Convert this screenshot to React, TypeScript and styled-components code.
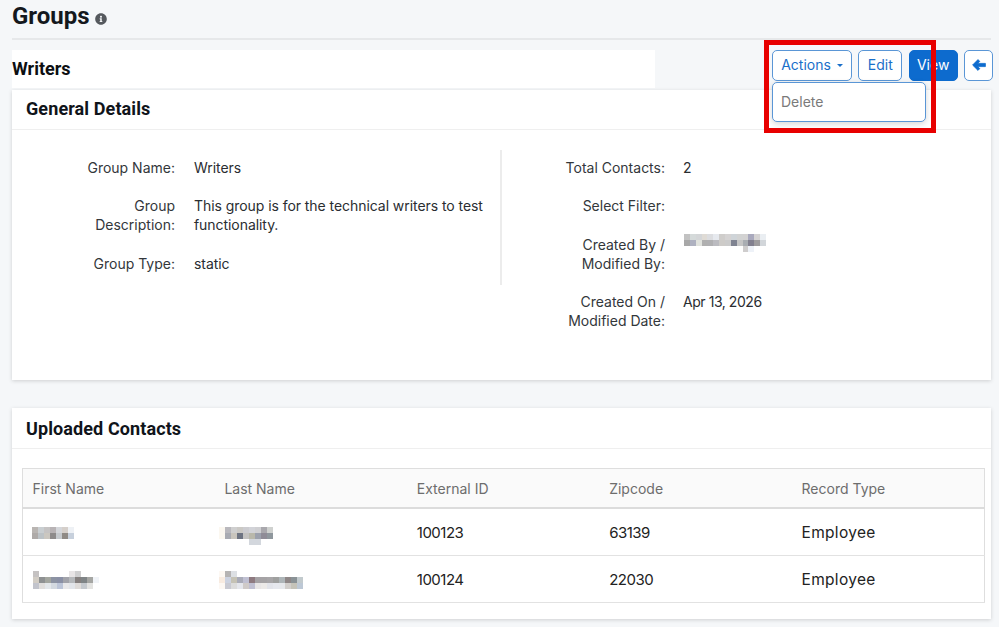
import React from 'react';
import styled, { createGlobalStyle } from 'styled-components';
import { FaInfoCircle } from 'react-icons/fa';

const GlobalStyle = createGlobalStyle`
  html, body {
    margin: 0;
    padding: 0;
    background: #f5f7f9;
  }
  body {
    font-family: Inter, "Open Sans", sans-serif;
    font-size: 14px;
    color: #222;
    overflow: hidden;
  }
`;

const Page = styled.div`
  position: relative;
  width: 999px;
  height: 627px;
  padding: 0 8px 0 12px;
  box-sizing: border-box;
  overflow: hidden;
`;

const TitleBar = styled.div`
  display: flex;
  align-items: center;
  gap: 5px;
  height: 38px;
  padding-bottom: 6px;
  box-sizing: border-box;
`;

const Rule = styled.div`
  height: 2px;
  background: #e6e8ea;
`;

const Title = styled.h1`
  margin: 0;
  font-family: Roboto, sans-serif;
  font-size: 24px;
  font-weight: 700;
  line-height: 28px;
  color: #14181d;
`;

const InfoIcon = styled(FaInfoCircle)`
  width: 12px;
  height: 12px;
  margin-top: 5px;
  color: #55595e;
`;

const TopRow = styled.div`
  display: flex;
  justify-content: space-between;
  align-items: flex-start;
  height: 40px;
  margin: 10px -2px 0 0;
`;

const NameBox = styled.div`
  width: 643px;
  height: 38px;
  background: #fff;
  font-family: Roboto, sans-serif;
  font-size: 18px;
  font-weight: 700;
  line-height: 38px;
  color: #0d0f12;
`;

const Actions = styled.div`
  position: relative;
  display: flex;
  gap: 6.33px;
`;

const Button = styled.button<{ $primary?: boolean; $width: number }>`
  display: flex;
  align-items: center;
  justify-content: center;
  gap: 6px;
  width: ${p => p.$width}px;
  height: 31px;
  padding: 0 0 2px;
  border: 1px solid ${p => (p.$primary ? '#0d6bce' : '#5a96d6')};
  border-radius: 5px;
  background: ${p => (p.$primary ? '#0d6bce' : '#fff')};
  color: ${p => (p.$primary ? '#fff' : '#1a6fc9')};
  font-family: inherit;
  font-size: 14px;
  cursor: pointer;
`;

const Caret = styled.span`
  width: 0;
  height: 0;
  margin-top: 2px;
  border-left: 3.5px solid transparent;
  border-right: 3.5px solid transparent;
  border-top: 3.5px solid #1a6fc9;
`;

const BackArrow = () => (
  <svg width="14" height="12" viewBox="0 0 14 12" fill="#0d6bce" stroke="#0d6bce" strokeWidth="0.8" strokeLinejoin="round">
    <path d="M6 0.6 L0.6 6 L6 11.4 L7.8 9.6 L5.6 7.6 H13.4 V4.4 H5.6 L7.8 2.4 Z" />
  </svg>
);

const Menu = styled.div`
  position: absolute;
  top: 32px;
  left: 0;
  width: 154px;
  height: 40px;
  box-sizing: border-box;
  padding-left: 8px;
  border: 1px solid #5a96d6;
  border-radius: 5px;
  background: #fff;
  box-shadow: 0 2px 6px rgba(0, 0, 0, 0.16);
  color: #7a7a7a;
  font-size: 14px;
  line-height: 37px;
  z-index: 2;
`;

const Highlight = styled.div`
  position: absolute;
  left: 764px;
  top: 40px;
  width: 172px;
  height: 93px;
  box-sizing: border-box;
  border: 5px solid #e80000;
  z-index: 3;
`;

const Card = styled.section<{ $height: number }>`
  height: ${p => p.$height}px;
  margin-bottom: 28px;
  background: #fff;
  box-shadow: 0 1px 4px rgba(0, 0, 0, 0.16);
`;

const CardHeader = styled.h2<{ $height: number; $line: number }>`
  height: ${p => p.$height}px;
  margin: 0;
  padding-left: 14px;
  box-sizing: border-box;
  border-bottom: 1px solid #efefef;
  font-family: Roboto, sans-serif;
  font-size: 18px;
  font-weight: 700;
  letter-spacing: 0.1px;
  line-height: ${p => p.$line}px;
  color: #10141a;
`;

const DetailsBody = styled.div`
  display: grid;
  grid-template-columns: 490px 1fr;
  padding-top: 20px;
  align-items: start;
`;

const DetailColumn = styled.dl<{ $labelWidth: number; $divided?: boolean; $gap: number }>`
  display: grid;
  grid-template-columns: ${p => p.$labelWidth}px 1fr;
  column-gap: ${p => p.$gap}px;
  row-gap: 19.3px;
  align-content: start;
  margin: 0;
  padding: 8px 0 12.4px;
  border-right: ${p => (p.$divided ? '2px solid #ececec' : '0')};
  line-height: 19px;
`;

const Label = styled.dt`
  text-align: right;
  color: #33373b;
`;

const Value = styled.dd<{ $numeric?: boolean }>`
  margin: 0;
  max-width: 296px;
  color: #2a2d31;
  letter-spacing: ${p => (p.$numeric ? '-0.45px' : '-0.06px')};
`;

const TableWrap = styled.div`
  padding: 19px 6px 0 10px;
`;

const Table = styled.table`
  width: 100%;
  border-collapse: collapse;
  table-layout: fixed;
  border: 1px solid #dedede;
`;

const HeadCell = styled.th`
  height: 38px;
  padding: 0 0 0 9.5px;
  background: #fafafa;
  border-bottom: 2px solid #dcdcdc;
  color: #6d6d6d;
  font-size: 14px;
  font-weight: 400;
  text-align: left;
`;

const BodyCell = styled.td<{ $numeric?: boolean; $large?: boolean }>`
  height: 46px;
  padding: 0 0 0 9.5px;
  border-bottom: 1px solid #e2e2e2;
  color: #222;
  font-size: ${p => (p.$large ? '15.5px' : '15px')};
  letter-spacing: ${p => (p.$numeric ? '-0.5px' : p.$large ? '0.3px' : '0')};
`;

const MosaicSvg = styled.svg<{ $left: number; $top: number }>`
  display: block;
  margin-left: ${p => p.$left}px;
  margin-top: ${p => p.$top}px;
`;

// redacted names in the screenshot, one colour per pixelated block ('' = nothing)
const Mosaic = ({ rows, left, top, cell = 6 }: { rows: string[][]; left: number; top: number; cell?: number }) => {
  const cols = Math.max(...rows.map(r => r.length));
  return (
    <MosaicSvg $left={left} $top={top} width={cols * cell} height={rows.length * 6} shapeRendering="crispEdges">
      {rows.map((row, y) =>
        row.map((fill, x) => fill && <rect key={`${x}-${y}`} x={x * cell} y={y * 6} width={cell} height={6} fill={fill} />)
      )}
    </MosaicSvg>
  );
};

const first1 = [
  ['#b9b5b2', '#c9ced1', '#c5c3c3', '#b8b3b5', '#d4d6da', '#d5cfca', '#eef1f5'],
  ['#aeaaa8', '#bcc2c6', '#cbc7c0', '#8e8b8b', '#c5c9cd', '#8f8a85', '#c7d0dc'],
];
const first2 = [
  ['#c5c2c2', '', '', '', '', '', '#e8e5e6', '#cfcfd0'],
  ['#d2cdc5', '#8e9192', '#a3a69f', '#8c93a3', '#8a90a5', '#a2a3aa', '#b5b8bb', '#85807f', '#7f8486', '#a5a6a3', '#f0f3f7'],
  ['#c2c4cc', '#e0dedc', '#e3e7ea', '#d3d9e0', '#bcc5d8', '#e8e8ea', '#e2e5ea', '#dedbd9', '#c5c9ce', '#e3e3e1'],
];
const last1 = [
  ['#fbf7f0', '#b9b8bd', '#cfcfcf', '#cbc9c5', '#ccccd0', '#d2d3d8', '#cfcfd2', '#a9a8ad', '#cfd1cf'],
  ['#fcf8f0', '#a9abb2', '#c9c5bd', '#6e7482', '#c4c3c1', '#b9b8ab', '#9ca1ad', '#8f8c97', '#8f979d'],
  ['', '', '', '', '', '#d3d7dd', '#d3d7dd'],
];
const last2 = [
  ['#fdf8f3', '#b5b3b3', '#dde0e4'],
  ['#f8ebe0', '#ccd2e0', '#c5c2b5', '#a9abb8', '#c0c0d2', '#8e7a80', '#a5a2a5', '#a5a3a5', '#a8a6a8', '#9fa09f', '#aeb5b8', '#8f8787', '#8a9296', '#c2cacd'],
  ['#fdf8f3', '#c9cad2', '#dcdcdc', '#e4e6ec', '#cfcac8', '#c0c0d2', '#e8e6e6', '#eceae8', '#e2e4ea', '#e6e8ee', '#e6e8ec', '#d2cfcc', '#c5c3b9', '#bdc8d5'],
];
const createdBy = [
  ['#c2c2c2', '#d5dada', '#d4d6d8', '#dfdbd5', '#dcdde0', '#e6e9ee', '#cfcdcb', '#d5d3d3', '#cfd4d8', '#d2d3d3', '#d3d2d2', '#a9a9bd', '#d5d3d3', '#eaeef2'],
  ['#a8a8a8', '#aeb1c0', '#e0e2dd', '#b0b0b0', '#b0b0b2', '#bbbbc0', '#cdcbc8', '#cbcbcb', '#7f8391', '#c5c5c5', '#a9adb2', '#82808f', '#9e9c9e', '#d2d6da'],
  ['', '', '', '', '', '', '', '', '', '', '#cfcdcd', '#eef2f8'],
];

const App: React.FC = () => (
  <Page>
    <GlobalStyle />
    <TitleBar>
      <Title>Groups</Title>
      <InfoIcon />
    </TitleBar>
    <Rule />
    <TopRow>
      <NameBox>Writers</NameBox>
      <Actions>
        <Button $width={80}>
          Actions <Caret />
        </Button>
        <Button $width={44}>Edit</Button>
        <Button $width={49} $primary>View</Button>
        <Button $width={29}><BackArrow /></Button>
        <Menu>Delete</Menu>
      </Actions>
    </TopRow>
    <Card $height={290}>
      <CardHeader $height={40} $line={38}>General Details</CardHeader>
      <DetailsBody>
        <DetailColumn $labelWidth={163} $gap={19} $divided>
          <Label>Group Name:</Label>
          <Value>Writers</Value>
          <Label>Group<br />Description:</Label>
          <Value>This group is for the technical writers to test functionality.</Value>
          <Label>Group Type:</Label>
          <Value>static</Value>
        </DetailColumn>
        <DetailColumn $labelWidth={163} $gap={18}>
          <Label>Total Contacts:</Label>
          <Value>2</Value>
          <Label>Select Filter:</Label>
          <Value />
          <Label>Created By /<br />Modified By:</Label>
          <Value><Mosaic rows={createdBy} left={1} top={-1} cell={5.85} /></Value>
          <Label>Created On /<br />Modified Date:</Label>
          <Value $numeric>Apr 13, 2026</Value>
        </DetailColumn>
      </DetailsBody>
    </Card>
    <Card $height={211}>
      <CardHeader $height={41} $line={41}>Uploaded Contacts</CardHeader>
      <TableWrap>
        <Table>
          <thead>
            <tr>
              <HeadCell>First Name</HeadCell>
              <HeadCell>Last Name</HeadCell>
              <HeadCell>External ID</HeadCell>
              <HeadCell>Zipcode</HeadCell>
              <HeadCell>Record Type</HeadCell>
            </tr>
          </thead>
          <tbody>
            <tr>
              <BodyCell><Mosaic rows={first1} left={-1} top={2} /></BodyCell>
              <BodyCell><Mosaic rows={last1} left={-5} top={8} /></BodyCell>
              <BodyCell $numeric>100123</BodyCell>
              <BodyCell $numeric>63139</BodyCell>
              <BodyCell $large>Employee</BodyCell>
            </tr>
            <tr>
              <BodyCell><Mosaic rows={first2} left={0} top={1} /></BodyCell>
              <BodyCell><Mosaic rows={last2} left={-5} top={1} /></BodyCell>
              <BodyCell $numeric>100124</BodyCell>
              <BodyCell $numeric>22030</BodyCell>
              <BodyCell $large>Employee</BodyCell>
            </tr>
          </tbody>
        </Table>
      </TableWrap>
    </Card>
    <Highlight />
  </Page>
);

export default App;
